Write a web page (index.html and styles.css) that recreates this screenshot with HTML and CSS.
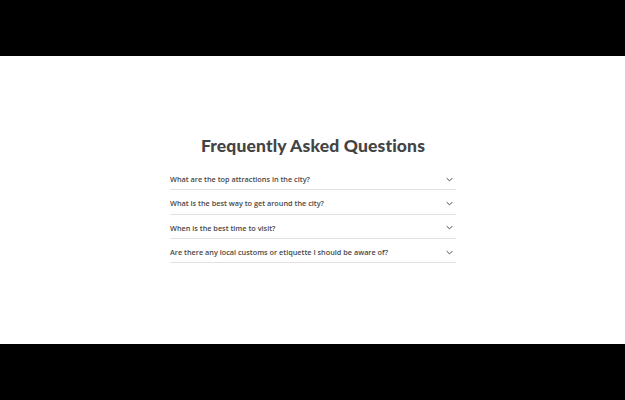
FILE: index.html
```html
<!DOCTYPE html>
<html lang="en">
<head>
<meta charset="utf-8">
<title>FAQ</title>
<link rel="stylesheet" href="styles.css">
</head>
<body>
<div class="frame">
  <section class="stage">
    <div class="faq">
      <h1 class="faq-title">Frequently Asked Questions</h1>
      <ul class="faq-list">
        <li class="faq-item"><span class="faq-q">What are the top attractions in the city?</span><svg class="chev" viewBox="0 0 10 6" width="7" height="5"><path d="M1 1l4 4 4-4" fill="none" stroke="#444" stroke-width="1.4"/></svg></li>
        <li class="faq-item"><span class="faq-q">What is the best way to get around the city?</span><svg class="chev" viewBox="0 0 10 6" width="7" height="5"><path d="M1 1l4 4 4-4" fill="none" stroke="#444" stroke-width="1.4"/></svg></li>
        <li class="faq-item"><span class="faq-q">When is the best time to visit?</span><svg class="chev" viewBox="0 0 10 6" width="7" height="5"><path d="M1 1l4 4 4-4" fill="none" stroke="#444" stroke-width="1.4"/></svg></li>
        <li class="faq-item"><span class="faq-q">Are there any local customs or etiquette I should be aware of?</span><svg class="chev" viewBox="0 0 10 6" width="7" height="5"><path d="M1 1l4 4 4-4" fill="none" stroke="#444" stroke-width="1.4"/></svg></li>
      </ul>
    </div>
  </section>
</div>
</body>
</html>
```
FILE: styles.css
```css
html, body {
  margin: 0;
  padding: 0;
  background: #000;
}
.frame {
  width: 625px;
  height: 400px;
  display: flex;
  flex-direction: column;
  justify-content: center;
}
.stage {
  height: 288px;
  background: #fff;
  display: flex;
  justify-content: center;
  box-sizing: border-box;
  padding-top: 78px;
}
.faq {
  width: 286px;
  margin-left: 1px;
}
.faq-title {
  margin: 0 0 8px;
  text-align: center;
  font-family: "Lato", sans-serif;
  font-weight: 900;
  font-size: 17.5px;
  line-height: 24px;
  color: #444;
  letter-spacing: 0.15px;
}
.faq-list {
  list-style: none;
  margin: 0;
  padding: 0;
}
.faq-item {
  display: flex;
  align-items: center;
  justify-content: space-between;
  box-sizing: border-box;
  height: 24.3px;
  border-bottom: 1px solid #e2e2e2;
  padding: 3px 3px 0 0;
}
.faq-q {
  font-family: "Open Sans", sans-serif;
  font-size: 7.3px;
  font-weight: 600;
  color: #484848;
}
.chev {
  display: block;
}
```
